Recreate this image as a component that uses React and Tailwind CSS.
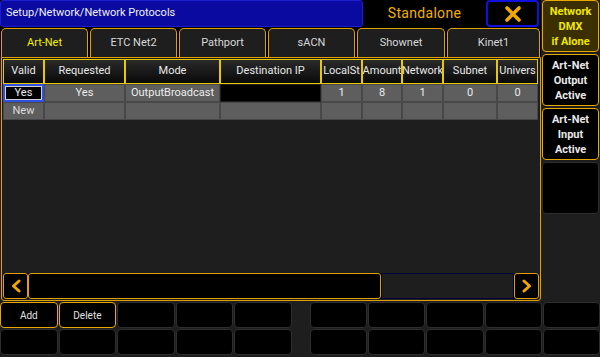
import React from 'react';

const tabs = [
    { label: 'Art-Net', w: 'w-[87px]' },
    { label: 'ETC Net2', w: 'w-[87px]' },
    { label: 'Pathport', w: 'w-[87px]' },
    { label: 'sACN', w: 'w-[87px]' },
    { label: 'Shownet', w: 'w-[88px]' },
    { label: 'Kinet1', w: 'w-[93px]' },
];

const cols = [
    { label: 'Valid', w: 'w-[41px]' },
    { label: 'Requested', w: 'w-[81px]' },
    { label: 'Mode', w: 'w-[95px]' },
    { label: 'Destination IP', w: 'w-[101px]' },
    { label: 'LocalSt', w: 'w-[41px]' },
    { label: 'Amount', w: 'w-[40px]' },
    { label: 'Network', w: 'w-[41px]' },
    { label: 'Subnet', w: 'w-[54px]' },
    { label: 'Univers', w: 'w-[41px]' },
];

const row1 = ['Yes', 'Yes', 'OutputBroadcast', '', '1', '8', '1', '0', '0'];

const SideButton = ({ lines, active, empty }) => (
    <div
        className={`h-[52px] rounded-[4px] border flex flex-col items-center justify-center leading-[15px] text-[11px] font-bold ${
            empty
                ? 'bg-black border-[#2c2c2c]'
                : active
                ? 'bg-[#3b2f00] border-[#e8a800] text-[#f0e800]'
                : 'bg-black border-[#e8a800] text-[#e8e8e8]'
        }`}
    >
        {lines.map((l) => (
            <span key={l}>{l}</span>
        ))}
    </div>
);

const BottomCell = ({ label }) => (
    <div
        className={`flex-1 h-[26px] rounded-[4px] border flex items-center justify-center text-[10px] text-[#e0e0e0] bg-black ${
            label ? 'border-[#e8a800]' : 'border-[#2e2e2e]'
        }`}
    >
        {label}
    </div>
);

export default function App() {
    return (
        <div
            className="w-[600px] h-[357px] bg-[#1e1e1e] flex flex-col overflow-hidden"
            style={{ fontFamily: 'Roboto, "Liberation Sans", sans-serif' }}
        >
            <div className="flex h-[301px]">
                {/* left part */}
                <div className="w-[541px] flex flex-col">
                    {/* title bar */}
                    <div className="flex h-[27px] bg-black">
                        <div className="w-[363px] bg-[#0a0aa0] border border-[#1c1cd0] rounded-[3px] flex items-center px-[5px] text-[11px] text-[#f0f0f0]">
                            Setup/Network/Network Protocols
                        </div>
                        <div className="w-[123px] flex items-center justify-center text-[14px] text-[#f0b000] tracking-[0.3px]">
                            Standalone
                        </div>
                        <div className="w-[53px] mr-[2px] border-2 border-[#1010e0] rounded-[4px] bg-black flex items-center justify-center">
                            <svg width="18" height="18" viewBox="0 0 18 18">
                                <path d="M3 3 L15 15 M15 3 L3 15" stroke="#f0a800" strokeWidth="3.6" strokeLinecap="round" />
                            </svg>
                        </div>
                    </div>

                    {/* tabs */}
                    <div className="flex h-[30px] gap-[2px] pt-[1px] pl-[1px] bg-black">
                        {tabs.map((t, i) => (
                            <div
                                key={t.label}
                                className={`${t.w} shrink-0 rounded-t-[5px] border border-b-0 border-[#e0a000] bg-[#1e1e1e] flex items-center justify-center text-[11px] ${
                                    i === 0 ? 'text-[#f4f000]' : 'text-[#d8d8d8]'
                                }`}
                            >
                                {t.label}
                            </div>
                        ))}
                    </div>

                    {/* main panel */}
                    <div className="flex-1 border border-[#e0a000] rounded-b-[3px] ml-[1px] flex flex-col bg-[#1e1e1e]">
                        <div className="flex-1 pl-[1px] pt-[1px]">
                            <div className="flex h-[25px]">
                                {cols.map((c) => (
                                    <div
                                        key={c.label}
                                        className={`${c.w} shrink-0 border border-[#e8c800] bg-gradient-to-b from-[#2a2a2a] to-[#0a0a0a] flex items-center justify-center text-[11px] text-[#e8e8e8] overflow-hidden whitespace-nowrap`}
                                    >
                                        {c.label}
                                    </div>
                                ))}
                            </div>
                            <div className="flex h-[18px]">
                                {cols.map((c, i) => (
                                    <div
                                        key={c.label}
                                        className={`${c.w} shrink-0 flex items-center justify-center text-[11px] text-[#ececec] ${
                                            i === 0
                                                ? 'bg-black border-2 border-[#3050e0] outline outline-1 outline-[#d0d0d0] -outline-offset-3'
                                                : i === 3
                                                ? 'bg-black border border-[#202020]'
                                                : 'bg-[#5e5e5e] border border-[#484848]'
                                        }`}
                                    >
                                        {row1[i]}
                                    </div>
                                ))}
                            </div>
                            <div className="flex h-[18px]">
                                {cols.map((c, i) => (
                                    <div
                                        key={c.label}
                                        className={`${c.w} shrink-0 bg-[#5e5e5e] border border-[#484848] flex items-center justify-center text-[11px] text-[#dcdcdc]`}
                                    >
                                        {i === 0 ? 'New' : ''}
                                    </div>
                                ))}
                            </div>
                        </div>

                        {/* scrollbar */}
                        <div className="flex h-[26px] mb-[1px] mx-[1px] bg-black">
                            <div className="w-[25px] border border-[#e0a000] rounded-[3px] flex items-center justify-center">
                                <svg width="12" height="14" viewBox="0 0 12 14">
                                    <path d="M9 2 L3.5 7 L9 12" stroke="#f0a800" strokeWidth="3" fill="none" strokeLinecap="round" strokeLinejoin="round" />
                                </svg>
                            </div>
                            <div className="w-[353px] border border-[#e0a000] rounded-[3px]" />
                            <div className="flex-1 bg-[#1e1e1e] border border-[#000040]" />
                            <div className="w-[25px] border border-[#e0a000] rounded-[3px] flex items-center justify-center">
                                <svg width="12" height="14" viewBox="0 0 12 14">
                                    <path d="M3 2 L8.5 7 L3 12" stroke="#f0a800" strokeWidth="3" fill="none" strokeLinecap="round" strokeLinejoin="round" />
                                </svg>
                            </div>
                        </div>
                    </div>
                </div>

                {/* right column */}
                <div className="flex-1 flex flex-col gap-[2px] pl-[1px] pr-[1px]">
                    <SideButton lines={['Network', 'DMX', 'if Alone']} active />
                    <SideButton lines={['Art-Net', 'Output', 'Active']} />
                    <SideButton lines={['Art-Net', 'Input', 'Active']} />
                    <SideButton lines={[]} empty />
                </div>
            </div>

            {/* bottom grid */}
            <div className="flex flex-col gap-[1px] pt-[1px]">
                {[0, 1].map((r) => (
                    <div key={r} className="flex gap-[18px]">
                        <div className="w-[292px] flex gap-[1px]">
                            <BottomCell label={r === 0 ? 'Add' : ''} />
                            <BottomCell label={r === 0 ? 'Delete' : ''} />
                            <BottomCell />
                            <BottomCell />
                            <BottomCell />
                        </div>
                        <div className="flex-1 flex gap-[1px]">
                            <BottomCell />
                            <BottomCell />
                            <BottomCell />
                            <BottomCell />
                            <BottomCell />
                        </div>
                    </div>
                ))}
            </div>
        </div>
    );
}
